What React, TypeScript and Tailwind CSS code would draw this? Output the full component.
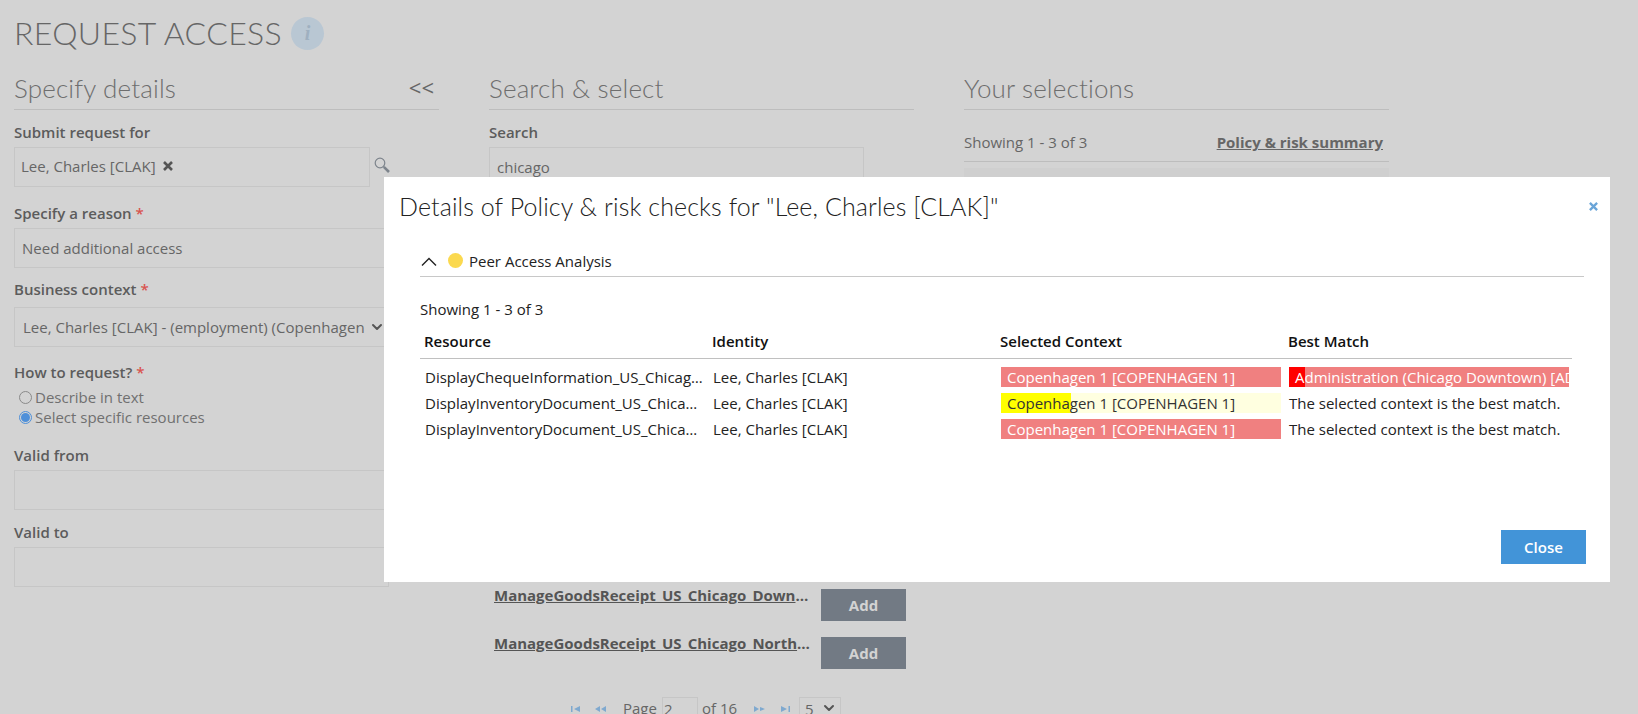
import { ChevronDown } from 'lucide-react';

const resources = [
  'ManageGoodsReceipt_US_Chicago_Downtown_Clerk',
  'ManageGoodsReceipt_US_Chicago_Northside_Clerk',
];

const rows = [
  { resource: 'DisplayChequeInformation_US_Chicago_Downtown', tone: 'red' },
  { resource: 'DisplayInventoryDocument_US_Chicago_Downtown', tone: 'yellow' },
  { resource: 'DisplayInventoryDocument_US_Chicago_Northside', tone: 'plain' },
];

const Cross = ({ className }: { className: string }) => (
  <svg viewBox="0 0 10 10" className={className} fill="none" stroke="currentColor" strokeWidth="2.6">
    <path d="M1 1L9 9M9 1L1 9" />
  </svg>
);

const Magnifier = () => (
  <svg viewBox="0 0 16 16" className="h-[16px] w-[16px] text-[#7d848c]" fill="none" stroke="currentColor">
    <circle cx="6" cy="6" r="4.8" strokeWidth="1.2" />
    <path d="M9.8 9.8L15 15" strokeWidth="2.6" />
  </svg>
);

const PagerIcon = ({ kind }: { kind: 'first' | 'prev' | 'next' | 'last' }) => {
  const paths = {
    first: 'M0 1h1.5v6H0zM9 1v6L3 4z',
    prev: 'M5 1v6L0 4zM11 1v6L6 4z',
    next: 'M0 1l5 3-5 3zM6 2l5 2-5 2z',
    last: 'M0 1l6 3-6 3zM7.5 1H9v6H7.5z',
  };
  return (
    <svg viewBox="0 0 11 8" className="h-[8px] w-[11px] text-[#7fa9cf]" fill="currentColor">
      <path d={paths[kind]} />
    </svg>
  );
};

const Label = ({ text, required }: { text: string; required?: boolean }) => (
  <div className="h-[20px] text-[15px] font-semibold leading-[20px] text-[#5c5c5c]">
    {text} {required && <span className="text-[#d9534f]">*</span>}
  </div>
);

const Field = ({ text }: { text?: string }) => (
  <div className="h-[40px] w-[375px] truncate border border-[#c6c6c6] px-[7px] text-[15px] leading-[38px] text-[#666666]">
    {text}
  </div>
);

const Heading = ({ text }: { text: string }) => (
  <div className="h-[41px] border-b border-[#bdbdbd] font-['Lato'] text-[26px] font-light leading-[38px] tracking-[0.15px] text-[#6e6e6e]">
    {text}
  </div>
);

const SpecifyDetails = () => (
  <div className="w-[425px]">
    <div className="relative">
      <Heading text="Specify details" />
      <span className="absolute right-[5px] top-[3px] text-[22px] leading-[30px] text-[#666666]">&lt;&lt;</span>
    </div>
    <div className="mt-[12px]"><Label text="Submit request for" /></div>
    <div className="mt-[5px] flex items-center gap-[4px]">
      <div className="flex h-[40px] w-[356px] items-center gap-[7px] border border-[#c6c6c6] px-[6px] pb-[2px] text-[15px] text-[#666666]">
        Lee, Charles [CLAK]
        <Cross className="h-[10px] w-[10px] text-[#555555]" />
      </div>
      <div className="-mt-[4px]"><Magnifier /></div>
    </div>
    <div className="mt-[16px]"><Label text="Specify a reason" required /></div>
    <div className="mt-[5px]"><Field text="Need additional access" /></div>
    <div className="mt-[11px]"><Label text="Business context" required /></div>
    <div className="mt-[8px] flex h-[40px] w-[375px] items-center border border-[#c6c6c6] pl-[8px] pr-[3px] text-[15px] text-[#666666]">
      <span className="flex-1 overflow-hidden whitespace-nowrap">Lee, Charles [CLAK] - (employment) (Copenhagen 1)</span>
      <ChevronDown className="ml-[4px] h-[16px] w-[16px] shrink-0 text-[#555555]" strokeWidth={3} />
    </div>
    <div className="mt-[15px]"><Label text="How to request?" required /></div>
    <div className="mt-[5px] flex h-[20px] items-center gap-[3px] pl-[5px] text-[15px] text-[#707070]">
      <span className="h-[13px] w-[13px] rounded-full border border-[#8a8a8a]" />
      Describe in text
    </div>
    <div className="flex h-[20px] items-center gap-[3px] pl-[5px] text-[15px] text-[#707070]">
      <span className="flex h-[13px] w-[13px] items-center justify-center rounded-full border border-[#4f90d9]">
        <span className="h-[9px] w-[9px] rounded-full bg-[#4f90d9]" />
      </span>
      Select specific resources
    </div>
    <div className="mt-[18px]"><Label text="Valid from" /></div>
    <div className="mt-[5px]"><Field /></div>
    <div className="mt-[12px]"><Label text="Valid to" /></div>
    <div className="mt-[5px]"><Field /></div>
  </div>
);

const SearchSelect = () => (
  <div className="w-[425px]">
    <Heading text="Search & select" />
    <div className="mt-[12px]"><Label text="Search" /></div>
    <div className="mt-[5px]"><Field text="chicago" /></div>
    <div className="mt-[402px] flex flex-col gap-[16px]">
      {resources.map((name) => (
        <div key={name} className="flex h-[32px] items-start pl-[5px]">
          <span className="mt-[-4px] w-[316px] truncate text-[15px] font-bold leading-[20px] text-[#555555] underline">{name}</span>
          <span className="ml-[11px] flex h-[32px] w-[85px] items-center justify-center bg-[#727a84] text-[15px] font-bold text-[#d3d3d3]">Add</span>
        </div>
      ))}
    </div>
    <div className="mt-[28px] flex items-start pl-[82px] text-[15px] leading-[20px] text-[#666666]">
      <span className="mt-[8px]"><PagerIcon kind="first" /></span>
      <span className="ml-[13px] mt-[8px]"><PagerIcon kind="prev" /></span>
      <span className="ml-[17px] mt-[1px]">Page</span>
      <span className="ml-[5px] h-[40px] w-[36px] border border-[#c6c6c6] pl-[1px] pt-[1px]">2</span>
      <span className="ml-[4px] mt-[1px]">of 16</span>
      <span className="ml-[17px] mt-[8px]"><PagerIcon kind="next" /></span>
      <span className="ml-[16px] mt-[8px]"><PagerIcon kind="last" /></span>
      <span className="ml-[7px] flex h-[40px] w-[42px] items-start justify-between border border-[#c6c6c6] pl-[5px] pr-[3px] pt-[1px]">
        5
        <ChevronDown className="mt-[1px] h-[16px] w-[16px] text-[#555555]" strokeWidth={3} />
      </span>
    </div>
  </div>
);

const YourSelections = () => (
  <div className="w-[425px]">
    <Heading text="Your selections" />
    <div className="flex h-[52px] items-center justify-between border-b border-[#bdbdbd] pr-[6px] pt-[14px] text-[15px] text-[#666666]">
      <span>Showing 1 - 3 of 3</span>
      <span className="font-bold underline">Policy &amp; risk summary</span>
    </div>
    <div className="mt-[6px] h-[40px] bg-[#cfcfcf]" />
  </div>
);

const Context = ({ tone }: { tone: string }) => {
  if (tone === 'yellow') {
    return (
      <div className="relative h-[20px] bg-[#ffffe0] pl-[6px] text-[#333333]">
        <span className="absolute left-0 top-0 h-[20px] w-[70px] bg-[#ffff00]" />
        <span className="relative">Copenhagen 1 [COPENHAGEN 1]</span>
      </div>
    );
  }
  return <div className="h-[20px] bg-[#f08080] pl-[6px] text-white">Copenhagen 1 [COPENHAGEN 1]</div>;
};

const Modal = () => (
  <div className="absolute left-[384px] top-[177px] h-[405px] w-[1226px] bg-white text-[15px] text-[#222222]">
    <Cross className="absolute right-[12px] top-[25px] h-[9px] w-[9px] text-[#6aa5d8]" />
    <div className="pl-[15px] pt-[14px] font-['Lato'] text-[25px] font-light leading-[30px] tracking-[0.1px] text-[#222222]">
      Details of Policy &amp; risk checks for "Lee, Charles [CLAK]"
    </div>
    <div className="ml-[36px] mr-[26px] mt-[14px] flex h-[42px] items-center border-b border-[#c8c8c8] pt-[12px]">
      <svg viewBox="0 0 16 9" className="ml-[1px] h-[9px] w-[16px] text-[#222222]" fill="none" stroke="currentColor" strokeWidth="1.4">
        <path d="M1 8.5L8 1.5L15 8.5" />
      </svg>
      <span className="-mt-[3px] ml-[11px] h-[15px] w-[15px] rounded-full bg-[#fbd94f]" />
      <span className="ml-[6px]">Peer Access Analysis</span>
    </div>
    <div className="ml-[36px] mt-[22px] leading-[20px]">Showing 1 - 3 of 3</div>
    <div className="ml-[36px] mr-[38px] mt-[12px] grid h-[28px] grid-cols-4 border-b border-[#c0c0c0] font-semibold text-[#111111]">
      {['Resource', 'Identity', 'Selected Context', 'Best Match'].map((head) => (
        <div key={head} className="pl-[4px] leading-[20px]">{head}</div>
      ))}
    </div>
    <div className="ml-[36px] mr-[38px] mt-[8px] flex flex-col gap-[6px]">
      {rows.map((row) => (
        <div key={row.resource} className="grid h-[20px] grid-cols-4 leading-[21px]">
          <div className="truncate pl-[5px] pr-[4px]">{row.resource}</div>
          <div className="pl-[5px]">Lee, Charles [CLAK]</div>
          <div className="pl-[5px] pr-[3px]">
            <Context tone={row.tone} />
          </div>
          <div className="overflow-hidden pl-[5px] pr-[3px]">
            {row.tone === 'red' ? (
              <div className="relative h-[20px] overflow-hidden whitespace-nowrap bg-[#f08080] pl-[6px] text-white">
                <span className="absolute left-0 top-0 h-[20px] w-[16px] bg-[#ff0000]" />
                <span className="relative">Administration (Chicago Downtown) [ADMIN_CHI]</span>
              </div>
            ) : (
              'The selected context is the best match.'
            )}
          </div>
        </div>
      ))}
    </div>
    <div className="absolute bottom-[18px] right-[24px] flex h-[34px] w-[85px] items-center justify-center bg-[#4294d8] font-semibold text-white">
      Close
    </div>
  </div>
);

export default function App() {
  return (
    <div className="relative h-[714px] overflow-hidden bg-[#d3d3d3] font-['Open_Sans',sans-serif]">
      <div className="flex items-center gap-[9px] pl-[14px] pt-[15px]">
        <h1 className="font-['Lato'] text-[32px] font-light leading-[36px] tracking-[0.35px] text-[#666666]">REQUEST ACCESS</h1>
        <span className="flex h-[33px] w-[33px] items-center justify-center rounded-full bg-[#b9c7d3] font-['Liberation_Serif'] text-[20px] font-bold italic text-[#9fb0c0]">i</span>
      </div>
      <div className="mt-[18px] flex gap-[50px] pl-[14px]">
        <SpecifyDetails />
        <SearchSelect />
        <YourSelections />
      </div>
      <Modal />
    </div>
  );
}
